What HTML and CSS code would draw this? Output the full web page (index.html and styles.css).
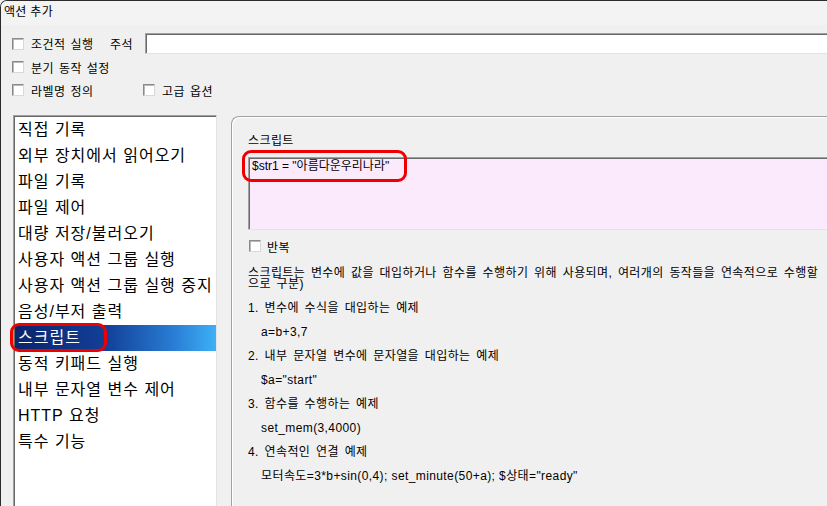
FILE: index.html
```html
<!DOCTYPE html>
<html lang="ko">
<head>
<meta charset="utf-8">
<title>액션 추가</title>
<link rel="stylesheet" href="styles.css">
</head>
<body>
<div class="window">
  <div class="titlebar">액션 추가</div>
  <div class="options">
    <div class="row row1">
      <label class="check w98"><span class="cb"></span><span>조건적 실행</span></label>
      <span class="note-label">주석</span>
      <div class="textbox"></div>
    </div>
    <div class="row">
      <label class="check"><span class="cb"></span><span>분기 동작 설정</span></label>
    </div>
    <div class="row">
      <label class="check w131"><span class="cb"></span><span>라벨명 정의</span></label>
      <label class="check"><span class="cb"></span><span>고급 옵션</span></label>
    </div>
  </div>
  <div class="main">
    <ul class="listbox">
      <li>직접 기록</li>
      <li>외부 장치에서 읽어오기</li>
      <li>파일 기록</li>
      <li>파일 제어</li>
      <li>대량 저장/불러오기</li>
      <li>사용자 액션 그룹 실행</li>
      <li>사용자 액션 그룹 실행 중지</li>
      <li>음성/부저 출력</li>
      <li class="selected">스크립트<span class="marker marker-list"></span></li>
      <li>동적 키패드 실행</li>
      <li>내부 문자열 변수 제어</li>
      <li>HTTP 요청</li>
      <li>특수 기능</li>
    </ul>
    <div class="group">
      <div class="group-label">스크립트</div>
      <div class="script-area">$str1 = "아름다운우리나라"<span class="marker marker-script"></span></div>
      <label class="check repeat"><span class="cb"></span><span>반복</span></label>
      <div class="desc">
        <div class="desc-line">스크립트는 변수에 값을 대입하거나 함수를 수행하기 위해 사용되며, 여러개의 동작들을 연속적으로 수행할</div>
        <div class="desc-line">으로 구분)</div>
      </div>
      <div class="examples">
        <div class="ex">1. 변수에 수식을 대입하는 예제</div>
        <div class="ex code">a=b+3,7</div>
        <div class="ex">2. 내부 문자열 변수에 문자열을 대입하는 예제</div>
        <div class="ex code">$a="start"</div>
        <div class="ex">3. 함수를 수행하는 예제</div>
        <div class="ex code">set_mem(3,4000)</div>
        <div class="ex">4. 연속적인 연결 예제</div>
        <div class="ex code">모터속도=3*b+sin(0,4); set_minute(50+a); $상태="ready"</div>
      </div>
    </div>
  </div>
</div>
</body>
</html>
```

FILE: styles.css
```css
* { box-sizing: border-box; }

html, body {
  margin: 0;
  padding: 0;
  width: 827px;
  height: 506px;
  overflow: hidden;
  background: #f0f0f0;
}

body {
  font-family: "Liberation Sans", "Noto Sans CJK KR", sans-serif;
  font-size: 12px;
  color: #000;
}

.window {
  width: 840px;
  height: 520px;
  border-top: 1px solid #2b2b2b;
  border-left: 1px solid #2b2b2b;
  border-top-left-radius: 7px;
  background: #f0f0f0;
  overflow: hidden;
}

.titlebar {
  height: 24px;
  line-height: 23px;
  padding-left: 3px;
  background: #f3f3f3;
  letter-spacing: 0.3px;
}

.options {
  padding-top: 8px;
  padding-left: 11px;
  letter-spacing: 0.5px;
  word-spacing: 1px;
}

.row {
  display: flex;
  align-items: center;
  height: 20px;
  margin-bottom: 3px;
}

.row1 {
  height: 21px;
}

.check {
  display: flex;
  align-items: center;
  gap: 7px;
  white-space: nowrap;
}

.w98 { width: 98px; }
.w131 { width: 131px; }

.cb {
  display: inline-block;
  width: 12px;
  height: 12px;
  background: #fff;
  border: 1px solid;
  border-color: #8a8a8a #d8d8d8 #d8d8d8 #8a8a8a;
  box-shadow: inset 1px 1px 0 #b8b8b8;
  flex: none;
}

.note-label {
  width: 35px;
}

.textbox {
  flex: 1;
  height: 21px;
  margin-right: -10px;
  background: #fff;
  border-top: 1px solid #a0a0a0;
  border-left: 1px solid #a0a0a0;
  border-bottom: 1px solid #e3e3e3;
  box-shadow: inset 1px 1px 0 #696969;
}

.main {
  display: flex;
  align-items: flex-start;
  gap: 14px;
  padding-left: 12px;
  margin-top: 15px;
}

.listbox {
  list-style: none;
  margin: 0;
  padding: 1px 0 0 1px;
  width: 204px;
  height: 420px;
  flex: none;
  background: #fff;
  border-top: 1px solid #a0a0a0;
  border-left: 1px solid #a0a0a0;
  border-right: 1px solid #e3e3e3;
  box-shadow: inset 1px 1px 0 #696969;
  font-size: 16px;
  letter-spacing: 1px;
}

.listbox li {
  position: relative;
  height: 26px;
  line-height: 26px;
  padding-left: 3px;
  white-space: nowrap;
}

.listbox li.selected {
  color: #fff;
  background: linear-gradient(to right, #0a246a 0%, #123f98 45%, #2a7fd6 80%, #3eb0f6 100%);
}

.marker {
  position: absolute;
  border: 3px solid #ee0000;
  border-radius: 9px;
  pointer-events: none;
}

.marker-list {
  left: -5px;
  top: -2px;
  width: 97px;
  height: 29px;
}

.group {
  flex: 1;
  margin-top: 1px;
  height: 420px;
  padding: 17px 0 0 16px;
  border-top: 1px solid #a0a0a0;
  border-left: 1px solid #a0a0a0;
  border-top-left-radius: 8px;
  box-shadow: inset 1px 1px 0 #ffffff;
  letter-spacing: 0.4px;
  word-spacing: 2px;
}

.group-label {
  line-height: 14px;
  height: 16px;
  margin-bottom: 7px;
}

.script-area {
  position: relative;
  height: 73px;
  margin-right: -10px;
  padding: 1px 0 0 3px;
  line-height: 14px;
  background: #fbeafb;
  border-top: 1px solid #a0a0a0;
  border-left: 1px solid #a0a0a0;
  border-bottom: 1px solid #e3e3e3;
  box-shadow: inset 1px 1px 0 #696969;
  letter-spacing: 0;
  word-spacing: 0;
}

.marker-script {
  left: -7px;
  top: -8px;
  width: 165px;
  height: 32px;
}

.repeat {
  margin-top: 9px;
  height: 14px;
  gap: 6px;
  padding-left: 1px;
}

.desc {
  margin-top: 15px;
}

.desc-line {
  line-height: 11px;
  white-space: nowrap;
}

.examples {
  margin-top: 6px;
}

.ex {
  line-height: 24px;
  height: 24px;
  white-space: nowrap;
}

.ex.code {
  padding-left: 13px;
  word-spacing: 0;
}
```
